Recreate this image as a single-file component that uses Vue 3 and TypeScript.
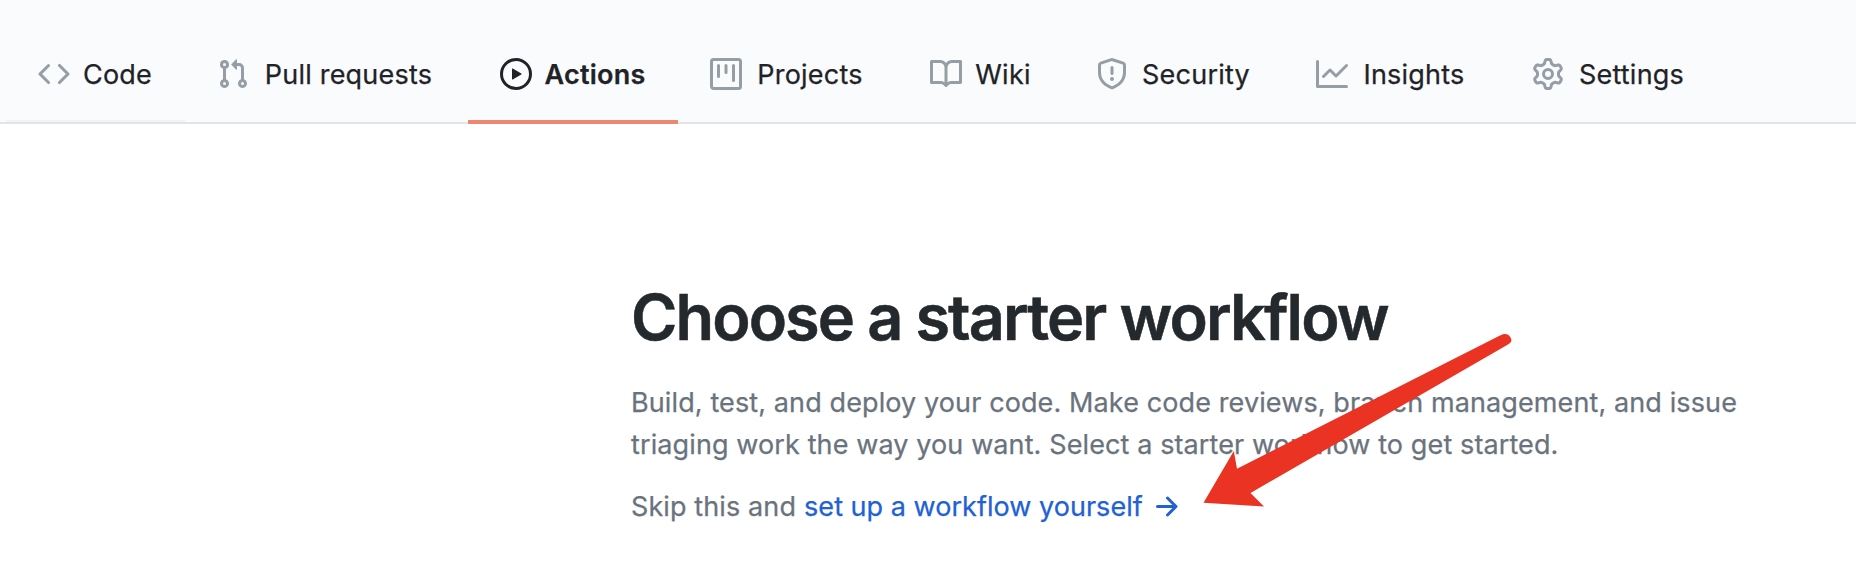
<script setup lang="ts">
interface Tab {
  label: string
  labelWidth: number
  path: string
  state?: 'current' | 'fading'
}

const tabs: Tab[] = [
  {
    label: 'Code',
    labelWidth: 71,
    state: 'fading',
    path: 'M4.72 3.22a.75.75 0 011.06 1.06L2.06 8l3.72 3.72a.75.75 0 11-1.06 1.06L.47 8.53a.75.75 0 010-1.06l4.25-4.25zm6.56 0a.75.75 0 10-1.06 1.06L13.94 8l-3.72 3.72a.75.75 0 101.06 1.06l4.25-4.25a.75.75 0 000-1.06l-4.25-4.25z',
  },
  {
    label: 'Pull requests',
    labelWidth: 175,
    path: 'M7.177 3.073L9.573.677A.25.25 0 0110 .854v4.792a.25.25 0 01-.427.177L7.177 3.427a.25.25 0 010-.354zM3.75 2.5a.75.75 0 100 1.5.75.75 0 000-1.5zm-2.25.75a2.25 2.25 0 113 2.122v5.256a2.251 2.251 0 11-1.5 0V5.372A2.25 2.25 0 011.5 3.25zM11 2.5h-1V4h1a1 1 0 011 1v5.628a2.251 2.251 0 101.5 0V5A2.5 2.5 0 0011 2.5zm1 10.25a.75.75 0 111.5 0 .75.75 0 01-1.5 0zM3.75 12a.75.75 0 100 1.5.75.75 0 000-1.5z',
  },
  {
    label: 'Actions',
    labelWidth: 102,
    state: 'current',
    path: 'M1.5 8a6.5 6.5 0 1113 0 6.5 6.5 0 01-13 0zM8 0a8 8 0 100 16A8 8 0 008 0zM6.379 5.227A.25.25 0 006 5.442v5.117a.25.25 0 00.379.214l4.264-2.559a.25.25 0 000-.428L6.379 5.227z',
  },
  {
    label: 'Projects',
    labelWidth: 112,
    path: 'M1.75 0A1.75 1.75 0 000 1.75v12.5C0 15.216.784 16 1.75 16h12.5A1.75 1.75 0 0016 14.25V1.75A1.75 1.75 0 0014.25 0H1.75zM1.5 1.75a.25.25 0 01.25-.25h12.5a.25.25 0 01.25.25v12.5a.25.25 0 01-.25.25H1.75a.25.25 0 01-.25-.25V1.75zM11.75 3a.75.75 0 00-.75.75v7.5a.75.75 0 001.5 0v-7.5a.75.75 0 00-.75-.75zm-8.25.75a.75.75 0 011.5 0v5.5a.75.75 0 01-1.5 0v-5.5zM8 3a.75.75 0 00-.75.75v3.5a.75.75 0 001.5 0v-3.5A.75.75 0 008 3z',
  },
  {
    label: 'Wiki',
    labelWidth: 58,
    path: 'M0 1.75A.75.75 0 01.75 1h4.253c1.227 0 2.317.59 3 1.501A3.744 3.744 0 0111.006 1h4.245a.75.75 0 01.75.75v10.5a.75.75 0 01-.75.75h-4.507a2.25 2.25 0 00-1.591.659l-.622.621a.75.75 0 01-1.06 0l-.622-.621A2.25 2.25 0 005.258 13H.75a.75.75 0 01-.75-.75V1.75zm8.755 3a2.25 2.25 0 012.25-2.25H14.5v9h-3.757c-.71 0-1.4.201-1.992.572l.004-7.322zm-1.504 7.324l.004-5.073-.002-2.253A2.25 2.25 0 005.003 2.5H1.5v9h3.757a3.75 3.75 0 011.994.574z',
  },
  {
    label: 'Security',
    labelWidth: 112,
    path: 'M7.467.133a1.75 1.75 0 011.066 0l5.25 1.68A1.75 1.75 0 0115 3.48V7c0 1.566-.32 3.182-1.303 4.682-.983 1.498-2.585 2.813-5.032 3.855a1.7 1.7 0 01-1.33 0c-2.447-1.042-4.049-2.357-5.032-3.855C1.32 10.182 1 8.566 1 7V3.48a1.75 1.75 0 011.217-1.667l5.25-1.68zm.61 1.429a.25.25 0 00-.153 0l-5.25 1.68a.25.25 0 00-.174.238V7c0 1.358.275 2.666 1.057 3.86.784 1.194 2.121 2.34 4.366 3.297a.2.2 0 00.154 0c2.245-.956 3.582-2.104 4.366-3.298C13.225 9.666 13.5 8.36 13.5 7V3.48a.25.25 0 00-.174-.237l-5.25-1.68zM9 10.5a1 1 0 11-2 0 1 1 0 012 0zm-.25-5.75a.75.75 0 10-1.5 0v3a.75.75 0 001.5 0v-3z',
  },
  {
    label: 'Insights',
    labelWidth: 108,
    path: 'M1.5 1.75a.75.75 0 00-1.5 0v12.5c0 .414.336.75.75.75h14.5a.75.75 0 000-1.5H1.5V1.75zm14.28 2.53a.75.75 0 00-1.06-1.06L10 7.94 7.53 5.47a.75.75 0 00-1.06 0L3.22 8.72a.75.75 0 001.06 1.06L7 7.06l2.47 2.47a.75.75 0 001.06 0l5.25-5.25z',
  },
  {
    label: 'Settings',
    labelWidth: 111,
    path: 'M7.429 1.525a6.593 6.593 0 011.142 0c.036.003.108.036.137.146l.289 1.105c.147.56.55.967.997 1.189.174.086.341.183.501.29.417.278.97.423 1.53.27l1.102-.303c.11-.03.175.016.195.046.219.31.41.641.573.989.014.031.022.11-.059.19l-.815.806c-.411.406-.562.957-.53 1.456a4.588 4.588 0 010 .582c-.032.499.119 1.05.53 1.456l.815.806c.08.08.073.159.059.19a6.494 6.494 0 01-.573.99c-.02.029-.086.074-.195.045l-1.103-.303c-.559-.153-1.112-.008-1.529.27-.16.107-.327.204-.5.29-.449.222-.851.628-.998 1.189l-.289 1.105c-.029.11-.101.143-.137.146a6.613 6.613 0 01-1.142 0c-.036-.003-.108-.037-.137-.146l-.289-1.105c-.147-.56-.55-.967-.997-1.189a4.502 4.502 0 01-.501-.29c-.417-.278-.97-.423-1.53-.27l-1.102.303c-.11.03-.175-.016-.195-.046a6.492 6.492 0 01-.573-.989c-.014-.031-.022-.11.059-.19l.815-.806c.411-.406.562-.957.53-1.456a4.587 4.587 0 010-.582c.032-.499-.119-1.05-.53-1.456l-.815-.806c-.08-.08-.073-.159-.059-.19a6.44 6.44 0 01.573-.99c.02-.029.086-.075.195-.045l1.103.303c.559.153 1.112.008 1.529-.27.16-.107.327-.204.5-.29.449-.222.851-.628.998-1.189l.289-1.105c.029-.11.101-.143.137-.146zM8 0c-.236 0-.47.01-.701.03-.743.065-1.29.615-1.458 1.261l-.29 1.106c-.017.066-.078.158-.211.224a5.994 5.994 0 00-.668.386c-.123.082-.233.09-.3.071L3.27 2.776c-.644-.177-1.392.02-1.82.63a7.977 7.977 0 00-.704 1.217c-.315.675-.111 1.422.363 1.891l.815.806c.05.048.098.147.088.294a6.084 6.084 0 000 .772c.01.147-.038.246-.088.294l-.815.806c-.474.469-.678 1.216-.363 1.891.2.428.436.835.704 1.218.428.609 1.176.806 1.82.63l1.103-.303c.066-.019.176-.011.299.071.213.143.436.272.668.386.133.066.194.158.212.224l.289 1.106c.169.646.715 1.196 1.458 1.26a8.094 8.094 0 001.402 0c.743-.064 1.29-.614 1.458-1.26l.29-1.106c.017-.066.078-.158.211-.224a5.98 5.98 0 00.668-.386c.123-.082.233-.09.3-.071l1.102.302c.644.177 1.392-.02 1.82-.63.268-.382.505-.789.704-1.217.315-.675.111-1.422-.364-1.891l-.814-.806c-.05-.048-.098-.147-.088-.294a6.1 6.1 0 000-.772c-.01-.147.039-.246.088-.294l.814-.806c.475-.469.679-1.216.364-1.891a7.992 7.992 0 00-.704-1.218c-.428-.609-1.176-.806-1.82-.63l-1.103.303c-.066.019-.176.011-.299-.071a5.991 5.991 0 00-.668-.386c-.133-.066-.194-.158-.212-.224L10.16 1.29C9.99.645 9.444.095 8.701.031A8.094 8.094 0 008 0zm1.5 8a1.5 1.5 0 11-3 0 1.5 1.5 0 013 0zM11 8a3 3 0 11-6 0 3 3 0 016 0z',
  },
]
</script>

<template>
  <div class="page">
    <nav class="tabs">
      <a v-for="tab in tabs" :key="tab.label" class="tab" :class="tab.state">
        <svg class="icon" viewBox="0 0 16 16" width="32" height="32">
          <path fill-rule="evenodd" :d="tab.path" />
        </svg>
        <span class="label" :style="{ width: tab.labelWidth + 'px' }">{{ tab.label }}</span>
      </a>
    </nav>

    <main class="intro">
      <h1>Choose a starter workflow</h1>
      <p class="lead">
        <span class="line">Build, test, and deploy your code. Make code reviews, branch management, and issue</span>
        <span class="line">triaging work the way you want. Select a starter workflow to get started.</span>
      </p>
      <p class="skip">
        <span>Skip this and</span>
        <a class="setup">set up a workflow yourself</a>
        <svg class="go" viewBox="0 0 16 16" width="32" height="32">
          <path
            fill-rule="evenodd"
            d="M8.22 2.97a.75.75 0 011.06 0l4.25 4.25a.75.75 0 010 1.06l-4.25 4.25a.75.75 0 01-1.06-1.06l2.97-2.97H3.75a.75.75 0 010-1.5h7.44L8.22 4.03a.75.75 0 010-1.06z"
          />
        </svg>
      </p>
    </main>

    <svg class="pointer" viewBox="1200 330 320 180" width="320" height="180">
      <path d="M1203.5 502.7L1233.8 451L1237 468.7L1500 335.6C1504 333 1508.500 333.500 1510.500 337.500C1512.500 341 1511 342.500 1508 344.500L1250.500 493L1264 506.500Z" />
    </svg>
  </div>
</template>

<style>
body {
  margin: 0;
  background: #fff;
}
</style>

<style scoped>
.page {
  position: relative;
  width: 1856px;
  height: 580px;
  overflow: hidden;
  background: #fff;
  font-family: Inter, 'Liberation Sans', sans-serif;
  font-size: 27px;
}
.tabs {
  display: flex;
  box-sizing: border-box;
  height: 124px;
  padding: 26px 0 0 6px;
  background: #fafbfc;
  box-shadow: inset 0 -2px #e1e4e8;
}
.tab {
  display: flex;
  align-items: center;
  box-sizing: border-box;
  height: 98px;
  padding: 0 32px 2px;
  gap: 12px;
  color: #1f2328;
}
.icon {
  flex: none;
  fill: #959da5;
}
.label {
  display: flex;
  justify-content: center;
  padding-top: 2px;
  line-height: 42px;
  letter-spacing: 0.22px;
  white-space: nowrap;
  -webkit-text-stroke: 0.25px currentColor;
}
.fading {
  box-shadow: inset 0 -2px #e1e4e8, inset 0 -4px #f2f3f5;
}
.current {
  font-weight: 600;
  box-shadow: inset 0 -4px #ec8770;
}
.current .icon {
  fill: #1f2328;
}
.intro {
  padding: 153px 0 0 631px;
  color: #6a737d;
}
h1 {
  margin: 0;
  font-size: 63px;
  line-height: 80px;
  font-weight: 600;
  letter-spacing: -1.9px;
  color: #24292e;
  white-space: nowrap;
  -webkit-text-stroke: 0.5px currentColor;
}
p {
  margin: 0;
  line-height: 42px;
  letter-spacing: 0.11px;
  white-space: nowrap;
  -webkit-text-stroke: 0.25px currentColor;
}
.lead {
  margin-top: 25px;
}
.line {
  display: block;
}
.skip {
  display: flex;
  align-items: center;
  margin-top: 20px;
}
.setup {
  margin-left: 8px;
  letter-spacing: 0.03px;
  color: #2160d5;
}
.go {
  margin-left: 7px;
  fill: #2160d5;
}
.pointer {
  position: absolute;
  left: 1200px;
  top: 330px;
  fill: #ea3323;
}
</style>
